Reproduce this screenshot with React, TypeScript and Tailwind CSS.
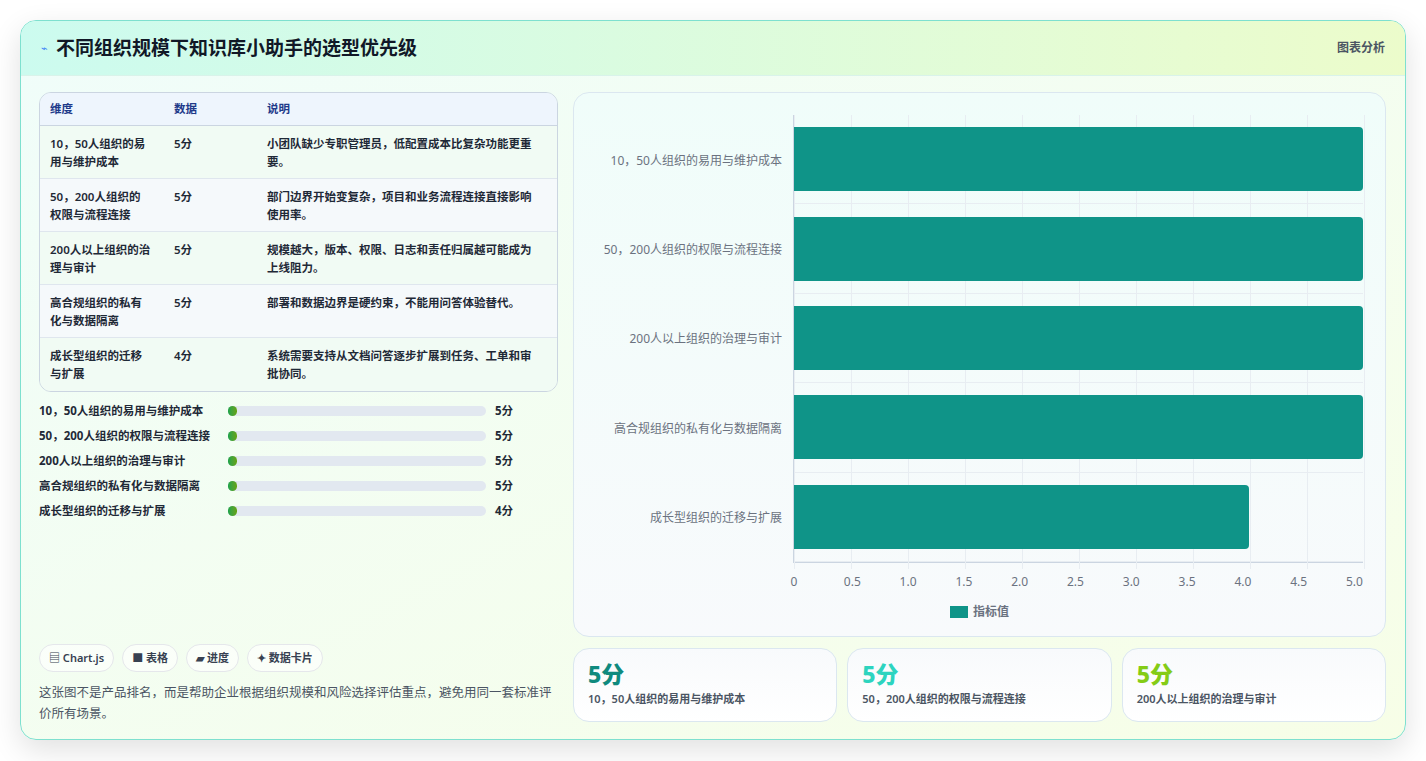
const FONT = { fontFamily: '"Noto Sans", "Noto Sans CJK SC", sans-serif' };

const ROWS = [
  { name: '10，50人组织的易用与维护成本', short: ['10，50人组织的易', '用与维护成本'], value: 5, desc: '小团队缺少专职管理员，低配置成本比复杂功能更重要。' },
  { name: '50，200人组织的权限与流程连接', short: ['50，200人组织的', '权限与流程连接'], value: 5, desc: '部门边界开始变复杂，项目和业务流程连接直接影响使用率。' },
  { name: '200人以上组织的治理与审计', short: ['200人以上组织的治', '理与审计'], value: 5, desc: '规模越大，版本、权限、日志和责任归属越可能成为上线阻力。' },
  { name: '高合规组织的私有化与数据隔离', short: ['高合规组织的私有', '化与数据隔离'], value: 5, desc: '部署和数据边界是硬约束，不能用问答体验替代。' },
  { name: '成长型组织的迁移与扩展', short: ['成长型组织的迁移', '与扩展'], value: 4, desc: '系统需要支持从文档问答逐步扩展到任务、工单和审批协同。' },
];

const TICKS = ['0', '0.5', '1.0', '1.5', '2.0', '2.5', '3.0', '3.5', '4.0', '4.5', '5.0'];

const STATS = [
  { label: '10，50人组织的易用与维护成本', color: 'text-[#0f8a7e]' },
  { label: '50，200人组织的权限与流程连接', color: 'text-[#2dd4bf]' },
  { label: '200人以上组织的治理与审计', color: 'text-[#84cc16]' },
];

export default function App() {
  return (
    <div className="min-h-[761px] bg-white px-5 pt-5" style={FONT}>
      <div className="h-[720px] overflow-hidden rounded-2xl border border-[#7ee0cf] bg-gradient-to-br from-[#f0fdfa] to-[#f7fee7] shadow-[0_10px_30px_rgba(0,0,0,0.12)]">
        <div className="flex h-[55px] items-center justify-between border-b border-[#d9f3ea] bg-gradient-to-r from-[#ccfbef] to-[#ecfccb] px-5">
          <div className="flex items-center gap-2">
            <span className="text-[11px] text-[#3b82f6]">⌁</span>
            <h1 className="text-[19px] font-bold text-[#111827]">不同组织规模下知识库小助手的选型优先级</h1>
          </div>
          <span className="text-[12px] font-semibold text-[#4b5563]">图表分析</span>
        </div>
        <div className="flex gap-[15px] px-[18px] pt-[16px]">
          <div className="flex w-[519px] flex-col">
            <div className="overflow-hidden rounded-xl border border-[#cbd5e1] text-[11.5px]">
              <div className="flex h-[33px] items-center border-b border-[#cbd5e1] bg-[#eef5fd] px-[10px] font-semibold text-[#1e3a8a]">
                <div className="w-[124px]">维度</div>
                <div className="w-[93px]">数据</div>
                <div>说明</div>
              </div>
              {ROWS.map((r, i) => (
                <div key={r.name} className={`flex h-[53px] items-start border-[#dfe6ee] px-[10px] pt-[9px] font-semibold leading-[18px] text-[#1f2937] ${i < 4 ? 'border-b' : ''} ${i % 2 ? 'bg-[#f5f9fb]' : 'bg-[#f1fbf4]'}`}>
                  <div className="w-[124px]">{r.short[0]}<br />{r.short[1]}</div>
                  <div className="w-[93px]">{r.value}分</div>
                  <div className="flex-1 pr-2">{r.desc}</div>
                </div>
              ))}
            </div>
            <div className="mt-[10px] flex flex-col gap-[7px]">
              {ROWS.map((r, i) => (
                <div key={r.name} className="flex h-[18px] items-center text-[11.5px] text-[#1f2937]">
                  <div className={`w-[189px] whitespace-nowrap ${i < 3 ? 'font-bold' : 'font-semibold'}`}>{r.name}</div>
                  <div className="h-[10px] w-[258px] rounded-full bg-[#e2e8f0]">
                    <div className="h-[10px] w-[9px] rounded-full bg-gradient-to-r from-[#16a34a] to-[#65a30d]" />
                  </div>
                  <div className="ml-[9px] font-bold">{r.value}分</div>
                </div>
              ))}
            </div>
            <div className="mt-[124px] flex gap-2">
              {['▤ Chart.js', '■ 表格', '▰ 进度', '✦ 数据卡片'].map((t) => (
                <span key={t} className="flex h-[28px] items-center rounded-full border border-[#e5e7eb] bg-white/60 px-[9px] text-[11px] font-semibold text-[#374151]">{t}</span>
              ))}
            </div>
            <p className="mt-[10px] text-[12.5px] leading-[21px] text-[#4b5563]">这张图不是产品排名，而是帮助企业根据组织规模和风险选择评估重点，避免用同一套标准评价所有场景。</p>
          </div>
          <div className="flex w-[813px] flex-col gap-[11px]">
            <div className="h-[545px] rounded-2xl border border-[#dbe7f0] bg-gradient-to-b from-[#f0fdfa] to-[#f8fafc] pt-[22px]">
              <div className="flex">
                <div className="flex w-[219px] flex-col pt-[1px]">
                  {ROWS.map((r) => (
                    <div key={r.name} className="flex h-[89.4px] items-center justify-end pr-[11px] text-[12px] text-[#6b7280]">{r.name}</div>
                  ))}
                </div>
                <div className="relative h-[448px] w-[570px] border-b border-l border-[#cbd5e1]">
                  {TICKS.map((t, i) => (
                    <div key={t} className="absolute top-0 h-[454px] w-px bg-[#e8edf2]" style={{ left: i * 57 }} />
                  ))}
                  <div className="relative flex flex-col">
                    {ROWS.map((r) => (
                      <div key={r.name} className="flex h-[89.4px] items-center border-b border-[#e8edf2]">
                        <div className="h-[64px] rounded-r-sm bg-[#0f9488]" style={{ width: (r.value / 5) * 569 }} />
                      </div>
                    ))}
                  </div>
                </div>
              </div>
              <div className="ml-[219px] mt-[10px] flex w-[570px] justify-between text-[12px] text-[#6b7280]" style={{ marginLeft: 214 }}>
                {TICKS.map((t) => (<span key={t} className="w-[12px] text-center">{t}</span>))}
              </div>
              <div className="mt-[12px] flex items-center justify-center gap-[5px] text-[12px] font-semibold text-[#6b7280]">
                <span className="h-[12px] w-[18px] bg-[#0f9488]" />指标值
              </div>
            </div>
            <div className="flex gap-[10px]">
              {STATS.map((s) => (
                <div key={s.label} className="h-[74px] flex-1 rounded-2xl border border-[#dbe7f0] bg-gradient-to-b from-[#f8fafc] to-white px-[14px] pt-[10px]">
                  <div className={`text-[23px] font-extrabold leading-[30px] ${s.color}`}>5分</div>
                  <div className="mt-[2px] text-[11px] font-semibold text-[#4b5563]">{s.label}</div>
                </div>
              ))}
            </div>
          </div>
        </div>
      </div>
    </div>
  );
}
